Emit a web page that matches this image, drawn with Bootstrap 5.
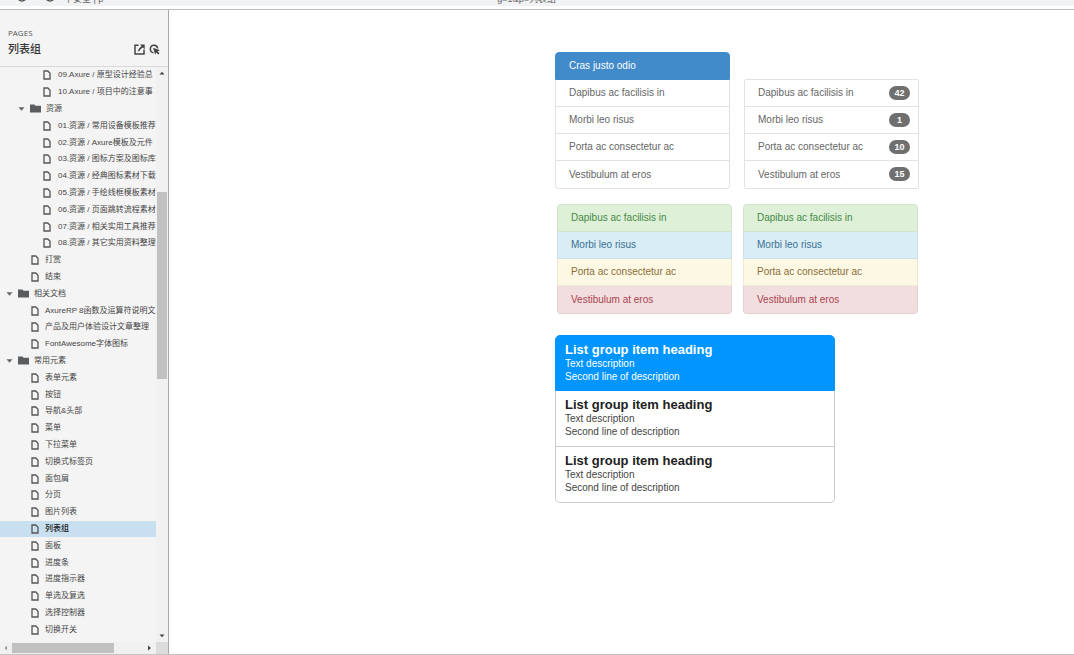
<!DOCTYPE html>
<html lang="zh-CN">
<head>
<meta charset="utf-8">
<meta name="viewport" content="width=device-width, initial-scale=1">
<title>列表组</title>
<link rel="stylesheet" href="https://cdn.jsdelivr.net/npm/bootstrap@5.3.0/dist/css/bootstrap.min.css">
<style>
body{font-family:"Liberation Sans","Noto Sans CJK SC",sans-serif;font-size:10px;line-height:13px;color:#666;background:#fff}
a{color:inherit;text-decoration:none}
.addr-bar{height:10px;background:#fff;border-bottom:1px solid #bbb;flex:none}
.addr-field{height:6px;background:#f1f2f3;font-size:9px;line-height:14px;color:#666;align-items:flex-end;overflow:hidden}
.addr-field span{height:14px;white-space:pre}
.addr-hash{margin-left:394px}
.side-panel{width:169px;background:#f4f4f4;border-right:1px solid #a8a8a8;flex:none}
.side-head{height:57px;border-bottom:1px solid #d9d9d9;padding:16px 8px 0;flex:none}
.side-label{font-family:"Open Sans",sans-serif;font-size:8px;line-height:14px;color:#555}
.side-title{font-size:11px;line-height:18px;color:#333;font-weight:500;margin:0}
.tool-btn{width:11px;height:11px;border:0;padding:0;background:none;color:#444;display:block}
.tool-btn svg{display:block}
.tree{font-size:8px;line-height:16px;color:#444;padding-bottom:4px}
.tree li{flex:1 1 0;min-height:0;white-space:nowrap}
.tree a{display:flex;align-items:center;height:100%;padding-left:31px;gap:6px}
.tree .lv3 a{padding-left:43px;gap:7px}
.tree .dir a{padding-left:6px;gap:5px}
.tree .dir2 a{padding-left:18px;gap:5px}
.tree .current{background:#c8dff0;color:#222;font-weight:500}
.tree svg{flex:none}
.v-bar{width:12px;background:#f1f1f1;flex:none}
.v-track{padding-top:117px}
.v-thumb{height:187px;width:10px;background:#c1c1c1}
.h-bar{height:12px;background:#f1f1f1;flex:none}
.h-thumb{width:102px;height:10px;background:#c1c1c1}
.corner{width:12px;background:#dcdcdc}
.foot-line{height:1px;background:#c4c4c4;flex:none}
.canvas{padding:42px 0 0 386px}
.demo{width:175px;flex:none;--bs-list-group-border-color:#e2e2e2;--bs-list-group-border-radius:4px}
.demo .list-group-item{height:27px;padding:0 13px 1px;color:#666;display:flex;align-items:center;justify-content:space-between}
.demo .list-group-item:first-child,.demo .list-group-item:last-child{height:28px}
.demo .list-group-item.active{background:#428bca;border-color:#428bca;color:#fff}
.demo .badge{background:#6f6f6f;width:21px;height:14px;padding:0;font-size:9px;line-height:14px;margin-right:-5px}
.row-one{gap:14px;align-items:flex-end}
.row-two{gap:11px;padding:15px 0 0 2px}
.demo.squared{--bs-list-group-border-radius:2px}
.demo .t-green{background:#dff0d8;color:#468847;border-color:#d3e2cd}
.demo .t-blue{background:#d9edf7;color:#3a6f91;border-color:#cde1eb}
.demo .t-yellow{background:#fcf8e3;color:#8a6d3b;border-color:#efead2}
.demo .t-red{background:#f2dede;color:#a94452;border-color:#e4d2d3}
.rich{width:280px;margin-top:21px;--bs-list-group-border-color:#ccc;--bs-list-group-border-radius:5px}
.rich .list-group-item{height:56px;padding:6px 9px 0;color:#444}
.rich h2{font-size:13px;line-height:15px;font-weight:700;margin:0;color:#222}
.rich p{margin:0;line-height:13px}
.rich .active{background:#0095ff;border-color:#0095ff;color:#fff}
.rich .active h2{color:#fff}
</style>
</head>
<body>
<svg class="d-none">
<symbol id="page" viewBox="0 0 8 10"><path d="M1 1H4.800L7 3.200V9H1Z" fill="none" stroke="#555" stroke-width="1.300"/></symbol>
<symbol id="folder" viewBox="0 0 11 9"><path d="M0 .500H4.500L5.500 1.800H11V8.500H0Z" fill="#5a5d60"/></symbol>
<symbol id="caret" viewBox="0 0 7 4"><path d="M.500 .300H6.500L3.500 3.700Z" fill="#666"/></symbol>
</svg>
<div class="d-flex flex-column vh-100 overflow-hidden">
<header class="addr-bar overflow-hidden">
<div class="addr-field d-flex">
<svg width="64" height="6" viewBox="0 0 64 6" class="align-self-start flex-shrink-0"><path d="M18 -1Q22 3 26 -1M46 -1Q50 3 54 -1" fill="none" stroke="#555" stroke-width="1.400"/></svg>
<span>不安全 | p</span><span class="addr-hash">g=1&amp;p=列表组</span>
</div>
</header>
<div class="d-flex flex-grow-1 overflow-hidden">
<aside class="side-panel d-flex flex-column">
<div class="side-head">
<div class="side-label">PAGES</div>
<div class="d-flex align-items-center"><h1 class="side-title flex-grow-1">列表组</h1>
<div class="d-flex gap-1">
<button class="tool-btn" aria-label="Open"><svg width="11" height="11" viewBox="0 0 11 11"><path d="M4.500 1.200H1V10H10V5.500" fill="none" stroke="currentColor" stroke-width="1.500"/><path d="M6 .400H10.700V5.200L9 3.600Q6.500 4.500 5 7.500L3.800 7Q4.500 4 7.500 2.200Z" fill="currentColor"/></svg></button>
<button class="tool-btn" aria-label="Interact"><svg width="11" height="11" viewBox="0 0 11 11"><path d="M4.500 8.700A3.700 3.700 0 1 1 8.700 4.500" fill="none" stroke="currentColor" stroke-width="1.500"/><path d="M4 3.800L11 6.300L8.700 7.300L10.500 9.500L9.300 10.600L7.300 8.500L6.200 10.600Z" fill="currentColor"/></svg></button>
</div></div>
</div>
<div class="d-flex flex-grow-1 overflow-hidden">
<ul class="tree list-unstyled d-flex flex-column flex-grow-1 overflow-hidden mb-0">
<li class="lv3"><a href="#"><svg width="8" height="10"><use href="#page"/></svg>09.Axure / 原型设计经验总</a></li>
<li class="lv3"><a href="#"><svg width="8" height="10"><use href="#page"/></svg>10.Axure / 项目中的注意事</a></li>
<li class="dir2"><a href="#"><svg width="7" height="4"><use href="#caret"/></svg><svg width="11" height="9"><use href="#folder"/></svg>资源</a></li>
<li class="lv3"><a href="#"><svg width="8" height="10"><use href="#page"/></svg>01.资源 / 常用设备模板推荐</a></li>
<li class="lv3"><a href="#"><svg width="8" height="10"><use href="#page"/></svg>02.资源 / Axure模板及元件</a></li>
<li class="lv3"><a href="#"><svg width="8" height="10"><use href="#page"/></svg>03.资源 / 图标方案及图标库</a></li>
<li class="lv3"><a href="#"><svg width="8" height="10"><use href="#page"/></svg>04.资源 / 经典图标素材下载</a></li>
<li class="lv3"><a href="#"><svg width="8" height="10"><use href="#page"/></svg>05.资源 / 手绘线框模板素材</a></li>
<li class="lv3"><a href="#"><svg width="8" height="10"><use href="#page"/></svg>06.资源 / 页面跳转流程素材</a></li>
<li class="lv3"><a href="#"><svg width="8" height="10"><use href="#page"/></svg>07.资源 / 相关实用工具推荐</a></li>
<li class="lv3"><a href="#"><svg width="8" height="10"><use href="#page"/></svg>08.资源 / 其它实用资料整理</a></li>
<li><a href="#"><svg width="8" height="10"><use href="#page"/></svg>打赏</a></li>
<li><a href="#"><svg width="8" height="10"><use href="#page"/></svg>结束</a></li>
<li class="dir"><a href="#"><svg width="7" height="4"><use href="#caret"/></svg><svg width="11" height="9"><use href="#folder"/></svg>相关文档</a></li>
<li><a href="#"><svg width="8" height="10"><use href="#page"/></svg>AxureRP 8函数及运算符说明文</a></li>
<li><a href="#"><svg width="8" height="10"><use href="#page"/></svg>产品及用户体验设计文章整理</a></li>
<li><a href="#"><svg width="8" height="10"><use href="#page"/></svg>FontAwesome字体图标</a></li>
<li class="dir"><a href="#"><svg width="7" height="4"><use href="#caret"/></svg><svg width="11" height="9"><use href="#folder"/></svg>常用元素</a></li>
<li><a href="#"><svg width="8" height="10"><use href="#page"/></svg>表单元素</a></li>
<li><a href="#"><svg width="8" height="10"><use href="#page"/></svg>按钮</a></li>
<li><a href="#"><svg width="8" height="10"><use href="#page"/></svg>导航&amp;头部</a></li>
<li><a href="#"><svg width="8" height="10"><use href="#page"/></svg>菜单</a></li>
<li><a href="#"><svg width="8" height="10"><use href="#page"/></svg>下拉菜单</a></li>
<li><a href="#"><svg width="8" height="10"><use href="#page"/></svg>切换式标签页</a></li>
<li><a href="#"><svg width="8" height="10"><use href="#page"/></svg>面包屑</a></li>
<li><a href="#"><svg width="8" height="10"><use href="#page"/></svg>分页</a></li>
<li><a href="#"><svg width="8" height="10"><use href="#page"/></svg>图片列表</a></li>
<li class="current"><a href="#" aria-current="page"><svg width="8" height="10"><use href="#page"/></svg>列表组</a></li>
<li><a href="#"><svg width="8" height="10"><use href="#page"/></svg>面板</a></li>
<li><a href="#"><svg width="8" height="10"><use href="#page"/></svg>进度条</a></li>
<li><a href="#"><svg width="8" height="10"><use href="#page"/></svg>进度指示器</a></li>
<li><a href="#"><svg width="8" height="10"><use href="#page"/></svg>单选及复选</a></li>
<li><a href="#"><svg width="8" height="10"><use href="#page"/></svg>选择控制器</a></li>
<li><a href="#"><svg width="8" height="10"><use href="#page"/></svg>切换开关</a></li>
</ul>
<div class="v-bar d-flex flex-column align-items-center py-1">
<svg width="6" height="4" viewBox="0 0 6 4"><path d="M.500 3.500H5.500L3 .700Z" fill="#444"/></svg>
<div class="v-track flex-grow-1"><div class="v-thumb"></div></div>
<svg width="6" height="4" viewBox="0 0 6 4"><path d="M.500 .500H5.500L3 3.300Z" fill="#444"/></svg>
</div>
</div>
<div class="h-bar d-flex">
<div class="d-flex flex-grow-1 align-items-center px-1"><svg width="8" height="6" viewBox="0 0 8 6"><path d="M3 .500V5.500L.500 3Z" fill="#999"/></svg><div class="h-thumb"></div><svg class="ms-auto" width="5" height="6" viewBox="0 0 5 6"><path d="M1 .500V5.500L4 3Z" fill="#444"/></svg></div>
<div class="corner"></div>
</div>
</aside>
<main class="canvas flex-grow-1">
<div class="row-one d-flex">
<div class="demo list-group">
<a href="#" class="list-group-item active">Cras justo odio</a>
<a href="#" class="list-group-item">Dapibus ac facilisis in</a>
<a href="#" class="list-group-item">Morbi leo risus</a>
<a href="#" class="list-group-item">Porta ac consectetur ac</a>
<a href="#" class="list-group-item">Vestibulum at eros</a>
</div>
<ul class="demo squared list-group">
<li class="list-group-item">Dapibus ac facilisis in<span class="badge rounded-pill">42</span></li>
<li class="list-group-item">Morbi leo risus<span class="badge rounded-pill">1</span></li>
<li class="list-group-item">Porta ac consectetur ac<span class="badge rounded-pill">10</span></li>
<li class="list-group-item">Vestibulum at eros<span class="badge rounded-pill">15</span></li>
</ul>
</div>
<div class="row-two d-flex">
<ul class="demo list-group">
<li class="list-group-item t-green">Dapibus ac facilisis in</li>
<li class="list-group-item t-blue">Morbi leo risus</li>
<li class="list-group-item t-yellow">Porta ac consectetur ac</li>
<li class="list-group-item t-red">Vestibulum at eros</li>
</ul>
<div class="demo list-group">
<a href="#" class="list-group-item t-green">Dapibus ac facilisis in</a>
<a href="#" class="list-group-item t-blue">Morbi leo risus</a>
<a href="#" class="list-group-item t-yellow">Porta ac consectetur ac</a>
<a href="#" class="list-group-item t-red">Vestibulum at eros</a>
</div>
</div>
<div class="rich list-group">
<a href="#" class="list-group-item active"><h2>List group item heading</h2><p>Text description</p><p>Second line of description</p></a>
<a href="#" class="list-group-item"><h2>List group item heading</h2><p>Text description</p><p>Second line of description</p></a>
<a href="#" class="list-group-item"><h2>List group item heading</h2><p>Text description</p><p>Second line of description</p></a>
</div>
</main>
</div>
<div class="foot-line"></div>
</div>
<script src="https://cdn.jsdelivr.net/npm/bootstrap@5.3.0/dist/js/bootstrap.bundle.min.js"></script>
</body>
</html>
